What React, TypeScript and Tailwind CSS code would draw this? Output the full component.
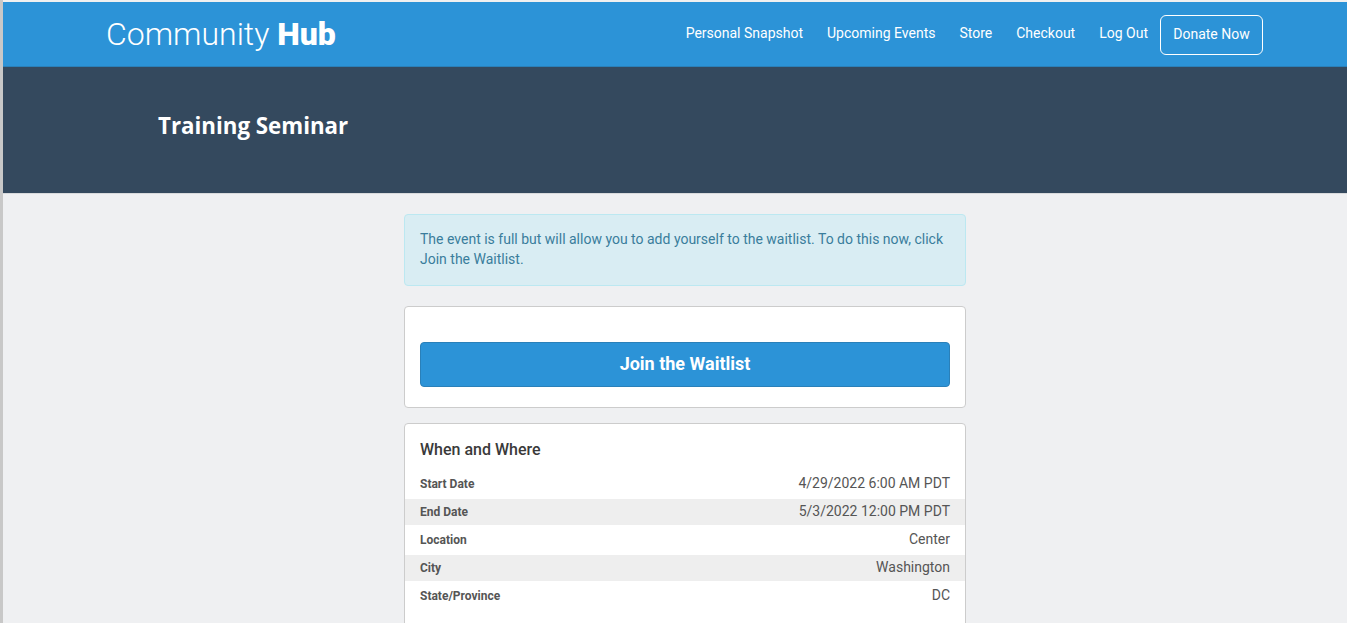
import React from 'react';

const navLinks = ['Personal Snapshot', 'Upcoming Events', 'Store', 'Checkout', 'Log Out'];

const details = [
  { label: 'Start Date', value: '4/29/2022 6:00 AM PDT' },
  { label: 'End Date', value: '5/3/2022 12:00 PM PDT' },
  { label: 'Location', value: 'Center' },
  { label: 'City', value: 'Washington' },
  { label: 'State/Province', value: 'DC' },
];

const App: React.FC = () => {
  return (
    <div className="h-[623px] overflow-hidden bg-[#c8c8c8] pl-[3px] font-['Roboto',sans-serif]">
      <div className="h-[2px] bg-[#f0f0f0]" />
      <header className="h-[65px] border-b border-[#2a80b9] bg-[#2c93d7] pl-[104px] pr-[84px] flex items-center justify-between text-white">
        <div className="text-[32px] font-light leading-none ml-[-1px]">
          Community <span className="font-black">Hub</span>
        </div>
        <nav className="flex items-center text-sm">
          {navLinks.map((link) => (
            <a key={link} className="ml-6 mt-[-2px] first:ml-0">
              {link}
            </a>
          ))}
          <a className="ml-3 mt-[1px] h-10 w-[103px] pb-[2px] flex items-center justify-center rounded-md border border-white">
            Donate Now
          </a>
        </nav>
      </header>

      <section className="h-[127px] bg-[#34495e] pl-[155px] pt-[43px] border-b border-[#d8dadc]">
        <h1 className="font-['Open_Sans',sans-serif] text-[22.3px] font-bold leading-8 text-white">Training Seminar</h1>
      </section>

      <main className="h-full bg-[#eff0f2] pt-[20px]">
        <div className="ml-[401px] w-[562px]">
          <div className="h-[72px] rounded border border-[#bce8f1] bg-[#d9edf3] px-[15px] pt-[14px] text-sm leading-5 text-[#3a7d9c]">
            The event is full but will allow you to add yourself to the waitlist. To do this now, click Join the Waitlist.
          </div>

          <div className="mt-5 h-[102px] rounded border border-[#cccccc] bg-white px-[15px] pt-[35px]">
            <button className="h-[45px] w-full rounded border border-[#2a80b9] bg-[#2c93d7] pb-[2px] text-lg font-bold text-white">
              Join the Waitlist
            </button>
          </div>

          <div className="mt-[15px] h-[300px] rounded border border-[#cccccc] bg-white pt-[16px]">
            <h2 className="px-[15px] text-base font-medium leading-5 text-[#3a3a3a]">When and Where</h2>
            <div className="mt-[9px] text-[#555555]">
              {details.map((row, idx) => (
                <div
                  key={row.label}
                  className={
                    idx % 2 === 1
                      ? 'h-[26px] bg-[#eeeeee] px-[15px] pt-[2px] flex items-baseline justify-between leading-5'
                      : 'h-[30px] px-[15px] pt-[4px] flex items-baseline justify-between leading-5'
                  }
                >
                  <span className="text-xs font-bold">{row.label}</span>
                  <span className="text-sm">{row.value}</span>
                </div>
              ))}
            </div>
          </div>
        </div>
      </main>
    </div>
  );
};

export default App;
